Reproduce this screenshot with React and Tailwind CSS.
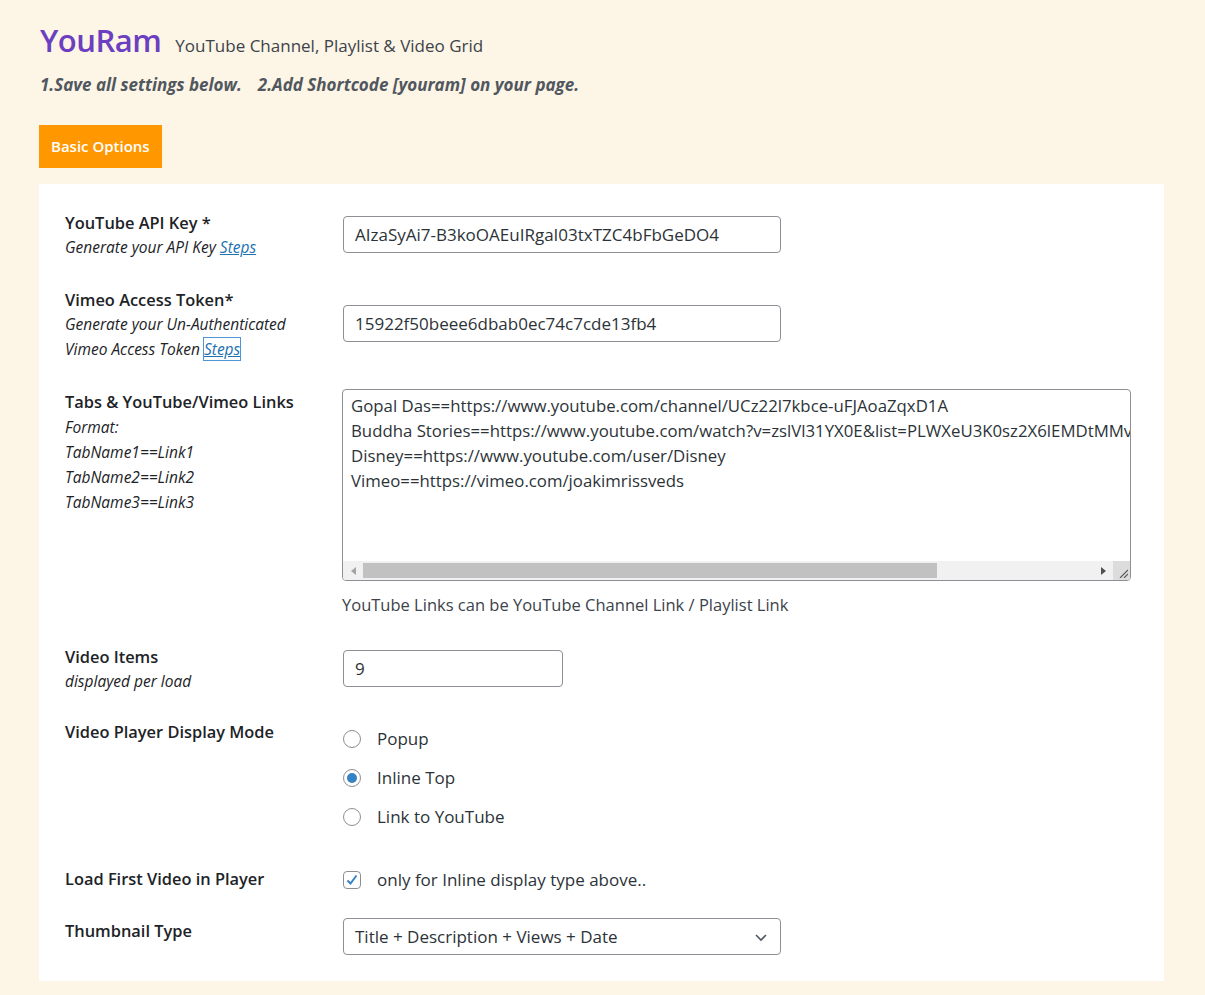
import React from 'react'

const font = { fontFamily: '"Open Sans", "Noto Sans", Arial, sans-serif' }

const links = [
  'Gopal Das==https://www.youtube.com/channel/UCz22l7kbce-uFJAoaZqxD1A',
  'Buddha Stories==https://www.youtube.com/watch?v=zslVl31YX0E&list=PLWXeU3K0sz2X6lEMDtMMvQ1',
  'Disney==https://www.youtube.com/user/Disney',
  'Vimeo==https://vimeo.com/joakimrissveds',
]

const Label = ({ children }) => (
  <div className="text-[16.4px] leading-[24px] font-semibold text-[#1d2327]">{children}</div>
)

const Sub = ({ children }) => (
  <div className="text-[15.5px] leading-[25px] italic text-[#1d2327]">{children}</div>
)

const TextInput = ({ value, width = 'w-[438px]' }) => (
  <div className={`${width} h-[37px] flex items-center px-[11px] border border-[#8c8f94] rounded-[4px] bg-white text-[17px] text-[#2c3338]`}>
    {value}
  </div>
)

const Radio = ({ checked, label }) => (
  <div className="h-[39px] flex items-center gap-[16px]">
    <span className="w-[18px] h-[18px] ml-px rounded-full border border-[#8c8f94] bg-white flex items-center justify-center">
      {checked && <span className="w-[10px] h-[10px] rounded-full bg-[#3582c4]" />}
    </span>
    <span className="text-[17px] text-[#2c3338]">{label}</span>
  </div>
)

export default function App() {
  return (
    <div className="min-h-[995px] bg-[#fdf5e6] pt-[20px] pb-[14px]" style={font}>
      <div className="px-[40px]">
        <div className="flex items-baseline gap-[14px]">
          <h1 className="text-[31px] leading-[40px] font-semibold tracking-[-0.5px] text-[#6b3fbf]">YouRam</h1>
          <span className="text-[17px] text-[#3c434a]">YouTube Channel, Playlist &amp; Video Grid</span>
        </div>
        <div className="mt-[13px] text-[17px] leading-[24px] font-bold italic text-[#50575e] flex gap-[16px]">
          <span>1.Save all settings below.</span>
          <span>2.Add Shortcode [youram] on your page.</span>
        </div>
      </div>

      <div className="ml-[39px] mt-[28px]">
        <button className="h-[43px] px-[12px] bg-[#ff9800] text-white text-[15px] font-semibold">
          Basic Options
        </button>
      </div>

      <div className="ml-[39px] mt-[16px] w-[1125px] bg-white pl-[26px] pt-[27px] pb-[26px]">
        {/* API key */}
        <div className="flex h-[77px]">
          <div className="w-[278px]">
            <Label>YouTube API Key *</Label>
            <Sub>
              Generate your API Key <a className="text-[#2271b1] underline">Steps</a>
            </Sub>
          </div>
          <div className="mt-[5px]">
            <TextInput value="AIzaSyAi7-B3koOAEuIRgaI03txTZC4bFbGeDO4" />
          </div>
        </div>

        {/* Vimeo token */}
        <div className="flex h-[102px]">
          <div className="w-[278px]">
            <Label>Vimeo Access Token*</Label>
            <Sub>Generate your Un-Authenticated</Sub>
            <Sub>
              Vimeo Access Token{' '}
              <a className="text-[#2271b1] underline outline outline-1 outline-[#4f94d4]">Steps</a>
            </Sub>
          </div>
          <div className="mt-[17px]">
            <TextInput value="15922f50beee6dbab0ec74c7cde13fb4" />
          </div>
        </div>

        {/* Tabs & links */}
        <div className="flex h-[255px]">
          <div className="w-[277px]">
            <Label>Tabs &amp; YouTube/Vimeo Links</Label>
            <div className="mt-[1px]">
              <Sub>Format:</Sub>
              <Sub>TabName1==Link1</Sub>
              <Sub>TabName2==Link2</Sub>
              <Sub>TabName3==Link3</Sub>
            </div>
          </div>
          <div className="-mt-px">
            <div className="w-[789px] h-[192px] border border-[#8c8f94] rounded-[4px] bg-white flex flex-col overflow-hidden">
              <div className="flex-1 overflow-hidden pl-[8px] pt-[3px] text-[16.8px] leading-[25px] text-[#2c3338] whitespace-nowrap">
                {links.map((l) => (
                  <div key={l}>{l}</div>
                ))}
              </div>
              <div className="h-[19px] flex items-stretch bg-[#f1f1f1]">
                <div className="w-[20px] flex items-center justify-center">
                  <svg width="5" height="8" viewBox="0 0 5 8"><path d="M5 0 L0 4 L5 8 Z" fill="#a3a3a3" /></svg>
                </div>
                <div className="w-[574px] my-[2px] bg-[#c1c1c1]" />
                <div className="flex-1" />
                <div className="w-[20px] flex items-center justify-center">
                  <svg width="5" height="8" viewBox="0 0 5 8"><path d="M0 0 L5 4 L0 8 Z" fill="#505050" /></svg>
                </div>
                <div className="w-[17px] bg-[#dcdcdc] flex items-end justify-end p-[2px]">
                  <svg width="9" height="9" viewBox="0 0 9 9">
                    <path d="M9 1 L1 9 M9 5 L5 9" stroke="#5a5a5a" strokeWidth="1.2" />
                  </svg>
                </div>
              </div>
            </div>
            <div className="mt-[12px] text-[16.5px] leading-[24px] text-[#3c434a]">
              YouTube Links can be YouTube Channel Link / Playlist Link
            </div>
          </div>
        </div>

        {/* Video items */}
        <div className="flex h-[75px]">
          <div className="w-[278px]">
            <Label>Video Items</Label>
            <Sub>displayed per load</Sub>
          </div>
          <div className="mt-[5px]">
            <TextInput value="9" width="w-[220px]" />
          </div>
        </div>

        {/* Display mode */}
        <div className="flex h-[147px]">
          <div className="w-[277px]">
            <Label>Video Player Display Mode</Label>
          </div>
          <div className="-mt-px">
            <Radio label="Popup" />
            <Radio label="Inline Top" checked />
            <Radio label="Link to YouTube" />
          </div>
        </div>

        {/* Load first */}
        <div className="flex h-[52px]">
          <div className="w-[277px]">
            <Label>Load First Video in Player</Label>
          </div>
          <div className="h-[26px] flex items-center gap-[16px]">
            <span className="w-[18px] h-[18px] ml-px rounded-[4px] border border-[#8c8f94] bg-white flex items-center justify-center">
              <svg width="14" height="14" viewBox="0 0 14 14">
                <path d="M2.5 7.5 L5.5 10.5 L11.5 2.5" fill="none" stroke="#3582c4" strokeWidth="2" />
              </svg>
            </span>
            <span className="text-[17px] text-[#2c3338]">only for Inline display type above..</span>
          </div>
        </div>

        {/* Thumbnail type */}
        <div className="flex">
          <div className="w-[278px]">
            <Label>Thumbnail Type</Label>
          </div>
          <div className="-mt-px">
            <div className="w-[438px] h-[37px] flex items-center justify-between pl-[11px] pr-[12px] border border-[#8c8f94] rounded-[4px] bg-white text-[17px] text-[#2c3338]">
              <span>Title + Description + Views + Date</span>
              <svg width="14" height="14" viewBox="0 0 14 14">
                <path d="M2 5 L7 10 L12 5" fill="none" stroke="#50575e" strokeWidth="1.6" />
              </svg>
            </div>
          </div>
        </div>
      </div>
    </div>
  )
}
